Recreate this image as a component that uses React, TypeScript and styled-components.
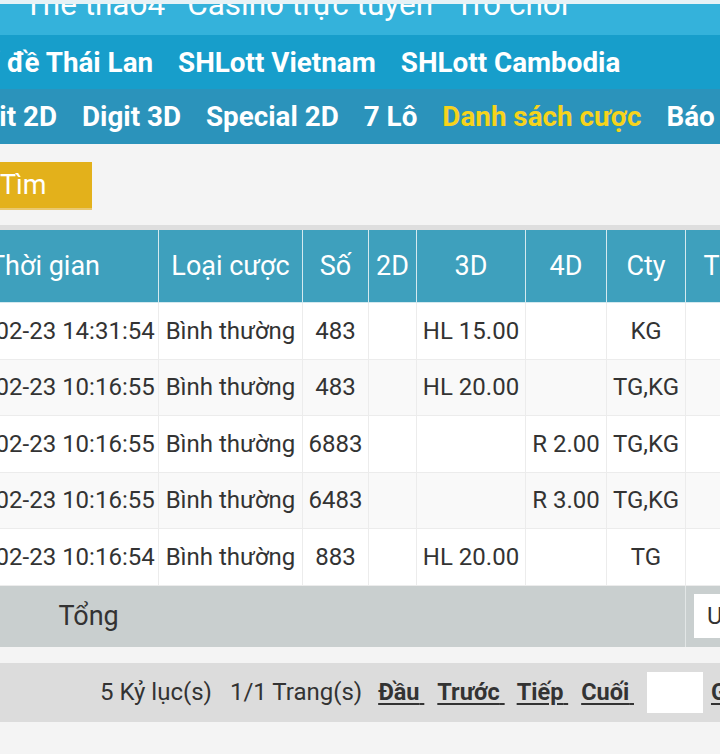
import React from "react";
import styled, { createGlobalStyle } from "styled-components";

const GlobalStyle = createGlobalStyle`
  html, body {
    margin: 0;
    padding: 0;
    background: #f4f4f4;
    font-family: Roboto, "Noto Sans", Arial, sans-serif;
  }
`;

const Viewport = styled.div`
  width: 720px;
  height: 754px;
  overflow: hidden;
  background: #f4f4f4;
`;

const TopBar = styled.div`
  height: 31px;
  border-top: 4px solid #e6f2f6;
  background: #34b2db;
  overflow: hidden;
`;

const TopLinks = styled.div`
  display: flex;
  gap: 22px;
  padding-left: 24px;
  margin-top: -17px;
  font-size: 31.5px;
  line-height: 36px;
  color: #fff;
  white-space: nowrap;
`;

const NavRow = styled.nav<{ $bg: string; $h: number }>`
  height: ${p => p.$h}px;
  background: ${p => p.$bg};
  overflow: hidden;
  display: flex;
  align-items: center;
`;

const NavList = styled.div<{ $shift: number }>`
  display: flex;
  gap: 25px;
  margin-left: ${p => p.$shift}px;
  white-space: nowrap;
`;

const NavItem = styled.a<{ $active?: boolean }>`
  font-size: 27.8px;
  font-weight: 700;
  color: ${p => (p.$active ? "#f6d31c" : "#fff")};
  text-decoration: none;
`;

const SearchArea = styled.div`
  padding: 18px 0 15px;
`;

const SearchButton = styled.button`
  display: block;
  width: 92px;
  height: 48px;
  border: none;
  background: #e3b11b;
  color: #fff;
  font-family: inherit;
  font-size: 27px;
  text-align: left;
  padding: 0;
  border-bottom: 2px solid #e9c870;
`;

const TableWrap = styled.div`
  border-top: 5px solid #dedede;
  overflow: hidden;
`;

const Table = styled.table`
  border-collapse: collapse;
  table-layout: fixed;
  margin-left: -70px;
  width: 843px;
  font-size: 24px;
  color: #333;
`;

const HeadCell = styled.th`
  height: 72px;
  padding: 0 4px;
  background: #3ea0bd;
  color: #fff;
  font-weight: 400;
  font-size: 27px;
  text-align: center;
  border: 1px solid #d4e9ef;
  border-top: none;
  white-space: nowrap;
`;

const BodyRow = styled.tr<{ $alt?: boolean }>`
  background: ${p => (p.$alt ? "#f9f9f9" : "#fff")};
`;

const Cell = styled.td`
  height: 55.5px;
  padding: 0 4px;
  text-align: center;
  border: 1px solid #ececec;
  white-space: nowrap;
`;

const TotalRow = styled.tr`
  background: #c9cfcf;
`;

const TotalLabel = styled.td`
  height: 61px;
  padding: 0 0 0 128px;
  font-size: 27px;
  text-align: left;
  border-right: 1px solid #e2e6e6;
`;

const TotalCell = styled.td`
  padding: 0 0 0 8px;
`;

const CurrencyBox = styled.div`
  height: 44px;
  background: #fff;
  font-size: 24px;
  line-height: 44px;
  padding-left: 13px;
  color: #333;
`;

const Pager = styled.div`
  margin-top: 16px;
  height: 59px;
  background: #dcdcdc;
  display: flex;
  align-items: center;
  padding-left: 100px;
  font-size: 24px;
  color: #333;
  white-space: nowrap;
`;

const PagerText = styled.span<{ $gap?: number }>`
  flex-shrink: 0;
  margin-right: ${p => p.$gap ?? 18}px;
`;

const PagerLink = styled.a<{ $gap?: number }>`
  flex-shrink: 0;
  font-weight: 700;
  font-size: 23.5px;
  color: #333;
  text-decoration: underline;
  text-underline-offset: 3px;
  margin-right: ${p => p.$gap ?? 14}px;
`;

const PageInput = styled.div`
  flex-shrink: 0;
  width: 56px;
  height: 41px;
  background: #fff;
  margin-right: 8px;
`;

const columns = [228, 144, 66, 48, 109, 81, 79, 88];
const heads = ["Thời gian", "Loại cược", "Số", "2D", "3D", "4D", "Cty", "Tiền"];

const rows = [
  ["2024-02-23 14:31:54", "Bình thường", "483", "", "HL 15.00", "", "KG"],
  ["2024-02-23 10:16:55", "Bình thường", "483", "", "HL 20.00", "", "TG,KG"],
  ["2024-02-23 10:16:55", "Bình thường", "6883", "", "", "R 2.00", "TG,KG"],
  ["2024-02-23 10:16:55", "Bình thường", "6483", "", "", "R 3.00", "TG,KG"],
  ["2024-02-23 10:16:54", "Bình thường", "883", "", "HL 20.00", "", "TG"],
];

export default function App() {
  return (
    <Viewport>
      <GlobalStyle />
      <TopBar>
        <TopLinks>
          <span>Thể thao4</span>
          <span>Casino trực tuyến</span>
          <span>Trò chơi</span>
        </TopLinks>
      </TopBar>
      <NavRow $bg="#179ecb" $h={54}>
        <NavList $shift={-33}>
          <NavItem>Xổ đề Thái Lan</NavItem>
          <NavItem>SHLott Vietnam</NavItem>
          <NavItem>SHLott Cambodia</NavItem>
        </NavList>
      </NavRow>
      <NavRow $bg="#2b93bb" $h={55}>
        <NavList $shift={-42}>
          <NavItem>Digit 2D</NavItem>
          <NavItem>Digit 3D</NavItem>
          <NavItem>Special 2D</NavItem>
          <NavItem>7 Lô</NavItem>
          <NavItem $active>Danh sách cược</NavItem>
          <NavItem>Báo cáo</NavItem>
        </NavList>
      </NavRow>
      <SearchArea>
        <SearchButton>Tìm</SearchButton>
      </SearchArea>
      <TableWrap>
        <Table>
          <colgroup>
            {columns.map((w, i) => (
              <col key={i} style={{ width: w }} />
            ))}
          </colgroup>
          <thead>
            <tr>
              {heads.map(h => (
                <HeadCell key={h}>{h}</HeadCell>
              ))}
            </tr>
          </thead>
          <tbody>
            {rows.map((r, i) => (
              <BodyRow key={i} $alt={i % 2 === 1}>
                {r.map((c, j) => (
                  <Cell key={j}>{c}</Cell>
                ))}
                <Cell />
              </BodyRow>
            ))}
            <TotalRow>
              <TotalLabel colSpan={7}>Tổng</TotalLabel>
              <TotalCell>
                <CurrencyBox>USD</CurrencyBox>
              </TotalCell>
            </TotalRow>
          </tbody>
        </Table>
      </TableWrap>
      <Pager>
        <PagerText>5 Kỷ lục(s)</PagerText>
        <PagerText $gap={16}>1/1 Trang(s)</PagerText>
        <PagerLink $gap={13}>Đầu{"\u2009"}</PagerLink>
        <PagerLink $gap={12}>Trước{"\u2009"}</PagerLink>
        <PagerLink $gap={13}>Tiếp{"\u2009"}</PagerLink>
        <PagerLink $gap={13}>Cuối{"\u2009"}</PagerLink>
        <PageInput />
        <PagerLink>Go</PagerLink>
      </Pager>
    </Viewport>
  );
}
